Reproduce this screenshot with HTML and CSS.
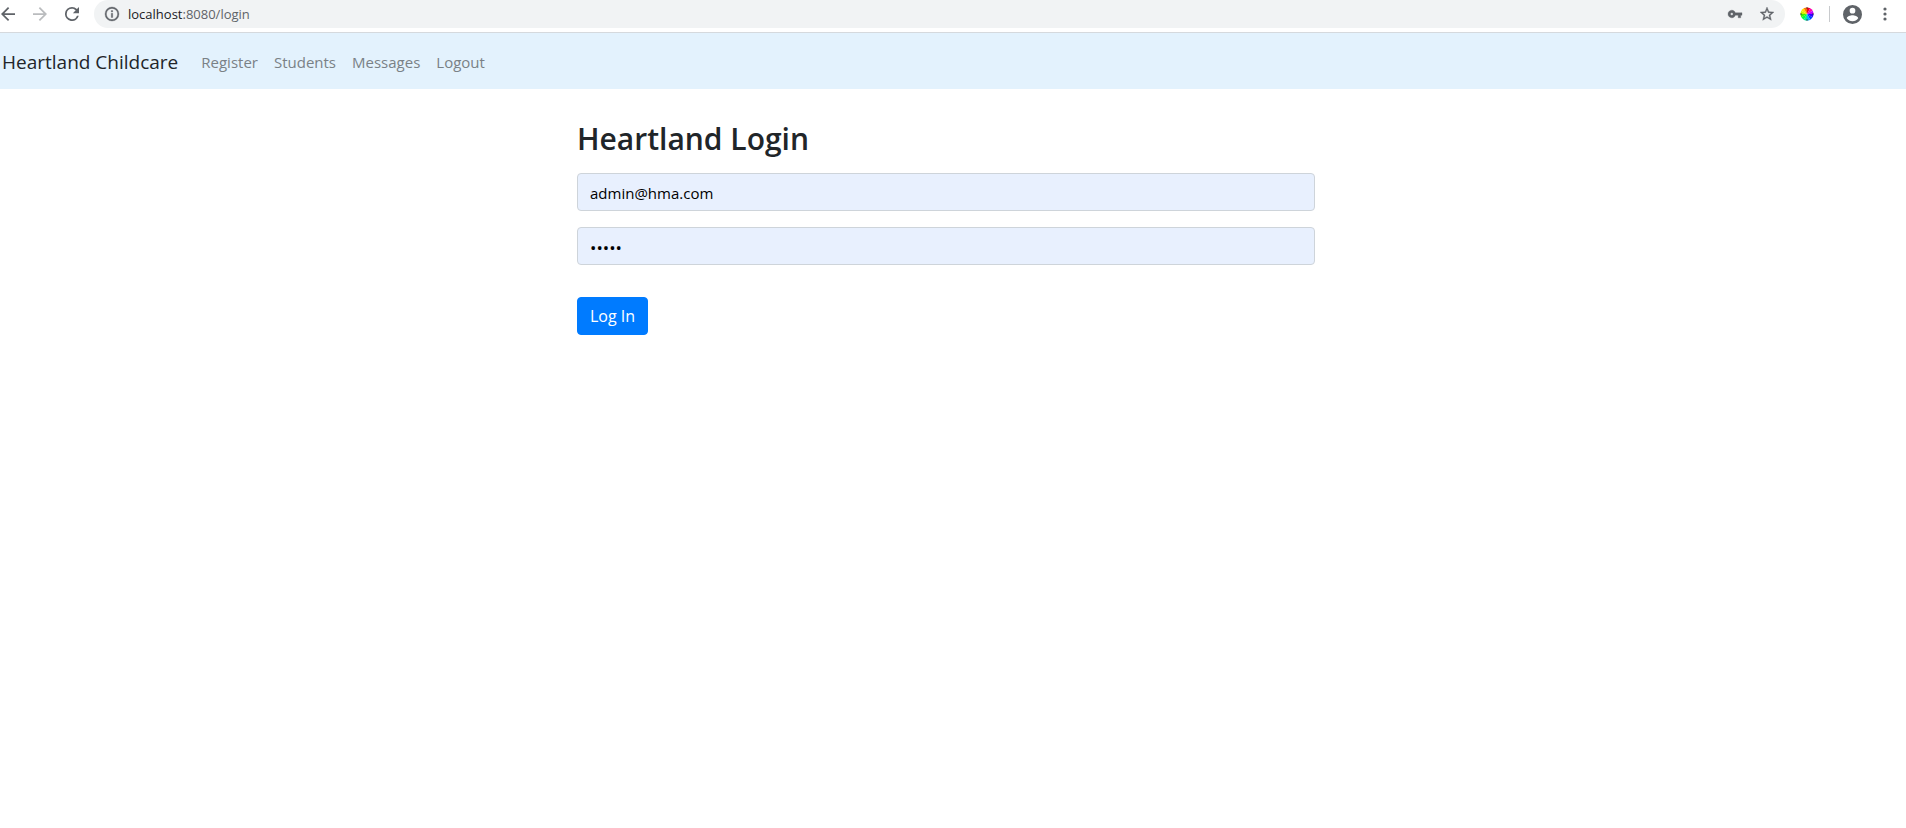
FILE: index.html
```html
<!DOCTYPE html>
<html lang="en">
<head>
<meta charset="utf-8">
<title>Heartland Login</title>
<link rel="stylesheet" href="styles.css">
</head>
<body>
<header class="toolbar">
  <div class="controls">
    <button class="tool" type="button" aria-label="Back"><svg class="icon" viewBox="4 4 16 16"><path d="M20 11H7.830l5.590-5.590L12 4l-8 8 8 8 1.410-1.410L7.830 13H20v-2z"/></svg></button>
    <button class="tool tool-disabled" type="button" aria-label="Forward" disabled><svg class="icon" viewBox="4 4 16 16"><path d="M12 4l-1.410 1.410L16.170 11H4v2h12.170l-5.580 5.590L12 20l8-8z"/></svg></button>
    <button class="tool" type="button" aria-label="Reload"><svg class="icon" viewBox="4 4 16 16"><path d="M17.650 6.350A7.960 7.960 0 0 0 12 4a8 8 0 1 0 7.730 10h-2.080A6 6 0 1 1 12 6c1.660 0 3.140.690 4.220 1.780L13 11h7V4l-2.350 2.350z"/></svg></button>
  </div>
  <div class="omnibox">
    <button class="tool" type="button" aria-label="Site information"><svg class="icon icon-bold" viewBox="2 2 20 20"><path d="M11 7h2v2h-2zm0 4h2v6h-2zm1-9a10 10 0 1 0 0 20 10 10 0 0 0 0-20zm0 18a8 8 0 1 1 0-16 8 8 0 0 1 0 16z"/></svg></button>
    <div class="url"><span class="host">localhost</span>:8080/login</div>
    <button class="tool key" type="button" aria-label="Saved passwords"><svg class="icon icon-bold" viewBox="1 1 22 22"><path d="M12.650 10a6 6 0 1 0 0 4H17v4h4v-4h2v-4H12.650zM7 14a2 2 0 1 1 0-4 2 2 0 0 1 0 4z"/></svg></button>
    <button class="tool" type="button" aria-label="Bookmark"><svg class="icon icon-bold" viewBox="2 2 20 20"><path d="M22 9.240l-7.190-.620L12 2 9.190 8.630 2 9.240l5.460 4.730L5.820 21 12 17.270 18.180 21l-1.630-7.030L22 9.240zM12 15.400l-3.760 2.270 1-4.280-3.320-2.880 4.380-.380L12 6.100l1.710 4.040 4.380.380-3.320 2.880 1 4.280L12 15.400z"/></svg></button>
  </div>
  <div class="extensions">
    <button class="tool" type="button" aria-label="Color picker">
      <svg class="wheel" viewBox="-7 -7 14 14">
        <path fill="#f00020" d="M0 0V-6.500A6.500 6.500 0 0 1 3.250-5.630z"/>
        <path fill="#ff00b0" d="M0 0L3.250-5.630A6.500 6.500 0 0 1 5.630-3.250z"/>
        <path fill="#c000ff" d="M0 0L5.630-3.250A6.500 6.500 0 0 1 6.500 0z"/>
        <path fill="#3000ff" d="M0 0H6.500A6.500 6.500 0 0 1 5.630 3.250z"/>
        <path fill="#0040ff" d="M0 0L5.630 3.250A6.500 6.500 0 0 1 3.250 5.630z"/>
        <path fill="#00b8ff" d="M0 0L3.250 5.630A6.500 6.500 0 0 1 0 6.500z"/>
        <path fill="#00f0a0" d="M0 0V6.500A6.500 6.500 0 0 1-3.250 5.630z"/>
        <path fill="#00ff40" d="M0 0L-3.250 5.630A6.500 6.500 0 0 1-5.630 3.250z"/>
        <path fill="#40f000" d="M0 0L-5.630 3.250A6.500 6.500 0 0 1-6.500 0z"/>
        <path fill="#d0f000" d="M0 0H-6.500A6.500 6.500 0 0 1-5.630-3.250z"/>
        <path fill="#ffe000" d="M0 0L-5.630-3.250A6.500 6.500 0 0 1-3.250-5.630z"/>
        <path fill="#ff7000" d="M0 0L-3.250-5.630A6.500 6.500 0 0 1 0-6.500z"/>
        <path stroke="#333" stroke-opacity=".8" d="M0-7v2M0 5v2M-7 0h2M5 0h2"/>
      </svg>
    </button>
    <span class="divider"></span>
    <button class="tool" type="button" aria-label="Profile"><svg class="avatar" viewBox="2 2 20 20"><path d="M12 2a10 10 0 1 0 0 20 10 10 0 0 0 0-20zm0 3a3 3 0 1 1 0 6 3 3 0 0 1 0-6zm0 14.200a7.200 7.200 0 0 1-6-3.220c.030-1.990 4-3.080 6-3.080s5.970 1.090 6 3.080a7.200 7.200 0 0 1-6 3.220z"/></svg></button>
    <button class="tool menu" type="button" aria-label="Menu"><svg class="icon" viewBox="0 0 14 14"><circle cx="7" cy="2" r="1.600"/><circle cx="7" cy="7" r="1.600"/><circle cx="7" cy="12" r="1.600"/></svg></button>
  </div>
</header>
<nav class="navbar">
  <a class="brand" href="#">Heartland Childcare</a>
  <a class="nav-link" href="#">Register</a>
  <a class="nav-link" href="#">Students</a>
  <a class="nav-link" href="#">Messages</a>
  <a class="nav-link" href="#">Logout</a>
</nav>
<main class="page">
  <form class="login">
    <h1 class="title">Heartland Login</h1>
    <input class="field" type="email" value="admin@hma.com" aria-label="Email">
    <input class="field password" type="password" value="admin" aria-label="Password">
    <button class="submit" type="button">Log In</button>
  </form>
</main>
</body>
</html>
```
FILE: styles.css
```css
* {
  box-sizing: border-box;
}

body {
  margin: 0;
  background: #fff;
  color: #212529;
  font: 15px/24px "Open Sans", "Noto Sans", sans-serif;
}

.toolbar {
  display: flex;
  align-items: center;
  padding: 0 14px 4px 1px;
  border-bottom: 1px solid #d5d9dd;
}

.controls {
  display: flex;
  gap: 18px;
  margin-right: 15px;
}

.tool {
  display: flex;
  align-items: center;
  padding: 0;
  border: 0;
  background: none;
  color: #5f6368;
}

.tool-disabled {
  color: #babcbe;
}

.icon {
  width: 14px;
  height: 14px;
  fill: currentColor;
}

.icon-bold {
  overflow: visible;
  stroke: currentColor;
  stroke-width: 0.5;
}

.omnibox {
  flex: 1;
  display: flex;
  align-items: center;
  height: 28px;
  padding: 0 11px;
  border-radius: 14px;
  background: #f1f3f4;
}

.url {
  flex: 1;
  margin-left: 9px;
  color: #5f6368;
  font-size: 13px;
}

.host {
  color: #202124;
}

.key {
  margin-right: 18px;
}

.extensions {
  display: flex;
  align-items: center;
  margin-left: 15px;
}

.wheel {
  width: 14px;
  height: 14px;
}

.divider {
  width: 1px;
  height: 16px;
  margin: 0 13px 0 15px;
  background: #c8cacd;
}

.avatar {
  width: 19px;
  height: 19px;
  fill: currentColor;
}

.menu {
  margin-left: 16px;
}

.navbar {
  display: flex;
  align-items: center;
  gap: 16px;
  min-height: 56px;
  padding: 9px 2px 7px;
  background: #e3f2fd;
}

.brand {
  margin-right: 7px;
  color: #212529;
  font-size: 19px;
  line-height: 30px;
  text-decoration: none;
}

.nav-link {
  color: #7a8186;
  text-decoration: none;
}

.page {
  padding: 30px 14px 0 0;
}

.login {
  display: flex;
  flex-direction: column;
  align-items: flex-start;
  max-width: 738px;
  margin: 0 auto;
}

.title {
  margin: 0 0 14px;
  font-size: 30px;
  font-weight: 600;
  line-height: 40px;
}

.field {
  width: 100%;
  height: 38px;
  margin: 0 0 16px;
  padding: 7px 12px 5px;
  border: 1px solid #ced4da;
  border-radius: 4px;
  background: #e8f0fe;
  color: #000;
  font: inherit;
}

.password {
  font-size: 17px;
}

.submit {
  height: 38px;
  margin-top: 16px;
  padding: 6px 12px;
  border: 1px solid #007bff;
  border-radius: 4px;
  background: #007bff;
  color: #fff;
  font: inherit;
  font-size: 16px;
}
```
